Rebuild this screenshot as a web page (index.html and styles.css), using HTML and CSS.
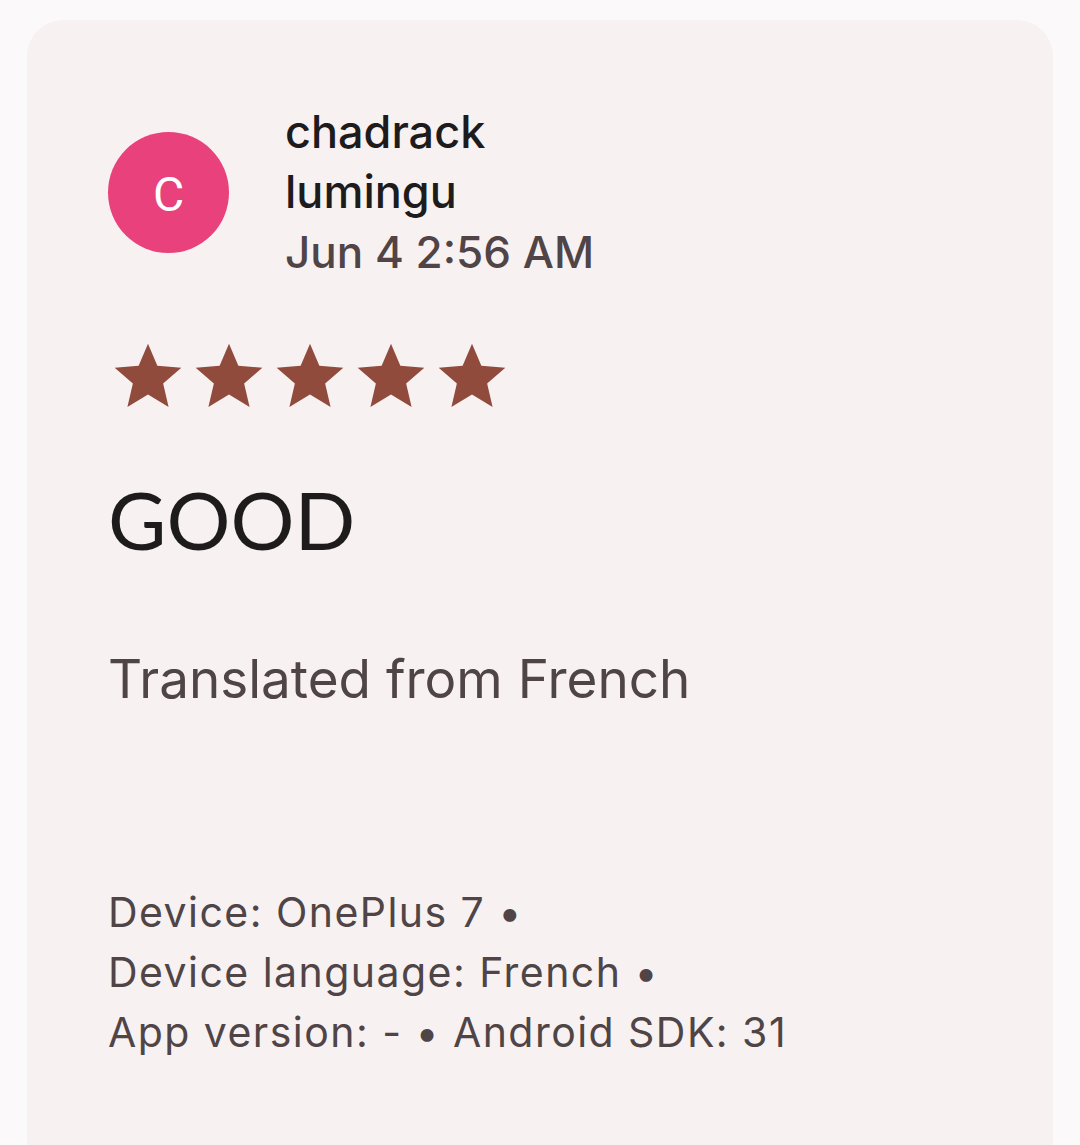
FILE: index.html
```html
<!DOCTYPE html>
<html>
<head>
<meta charset="utf-8">
<link rel="stylesheet" href="styles.css">
</head>
<body>
<div class="card">
  <div class="header">
    <div class="avatar">C</div>
    <div class="who">
      <div class="name">chadrack<br>lumingu</div>
      <div class="date">Jun 4 2:56 AM</div>
    </div>
  </div>
  <div class="stars">
    <svg viewBox="0 0 24 24"><path d="M12 17.27L18.18 21l-1.64-7.03L22 9.24l-7.19-.61L12 2 9.19 8.63 2 9.24l5.46 4.73L5.82 21z"/></svg>
    <svg viewBox="0 0 24 24"><path d="M12 17.27L18.18 21l-1.64-7.03L22 9.24l-7.19-.61L12 2 9.19 8.63 2 9.24l5.46 4.73L5.82 21z"/></svg>
    <svg viewBox="0 0 24 24"><path d="M12 17.27L18.18 21l-1.64-7.03L22 9.24l-7.19-.61L12 2 9.19 8.63 2 9.24l5.46 4.73L5.82 21z"/></svg>
    <svg viewBox="0 0 24 24"><path d="M12 17.27L18.18 21l-1.64-7.03L22 9.24l-7.19-.61L12 2 9.19 8.63 2 9.24l5.46 4.73L5.82 21z"/></svg>
    <svg viewBox="0 0 24 24"><path d="M12 17.27L18.18 21l-1.64-7.03L22 9.24l-7.19-.61L12 2 9.19 8.63 2 9.24l5.46 4.73L5.82 21z"/></svg>
  </div>
  <div class="title">GOOD</div>
  <div class="translated">Translated from French</div>
  <div class="meta">Device: OnePlus 7 •<br>Device language: French •<br>App version: - • Android SDK: 31</div>
</div>
</body>
</html>
```
FILE: styles.css
```css
html, body {
  margin: 0;
  padding: 0;
  background: #fcf9fa;
  overflow: hidden;
  height: 1145px;
}
body {
  padding: 20px 27px 0 27px;
  box-sizing: border-box;
}
.card {
  background: #f7f1f2;
  border-radius: 36px;
  height: 1200px;
  padding: 82px 81px 0 81px;
  box-sizing: border-box;
}
.header {
  display: flex;
  align-items: center;
  gap: 56px;
}
.avatar {
  width: 121px;
  height: 121px;
  border-radius: 50%;
  background: #e9417b;
  color: #fff;
  font-family: Roboto, sans-serif;
  font-size: 48px;
  padding-top: 4px;
  box-sizing: border-box;
  display: flex;
  align-items: center;
  justify-content: center;
  flex-shrink: 0;
}
.who {
  font-family: Inter, sans-serif;
  font-size: 45px;
  line-height: 60px;
  font-weight: 500;
}
.name {
  color: #1d1b1c;
}
.date {
  color: #504446;
  font-size: 44px;
}
.stars {
  display: flex;
  gap: 1px;
  margin-top: 55px;
}
.stars svg {
  display: block;
  width: 80px;
  height: 80px;
  fill: #904b3c;
}
.title {
  font-family: Lato, sans-serif;
  font-size: 80px;
  line-height: 100px;
  color: #1d1b1c;
  margin-top: 52px;
}
.translated {
  font-family: Inter, sans-serif;
  font-size: 53px;
  line-height: 70px;
  color: #4f4446;
  margin-top: 75px;
}
.meta {
  font-family: Inter, sans-serif;
  font-size: 41px;
  line-height: 60px;
  letter-spacing: 1.45px;
  color: #4f4446;
  margin-top: 168px;
}
```
